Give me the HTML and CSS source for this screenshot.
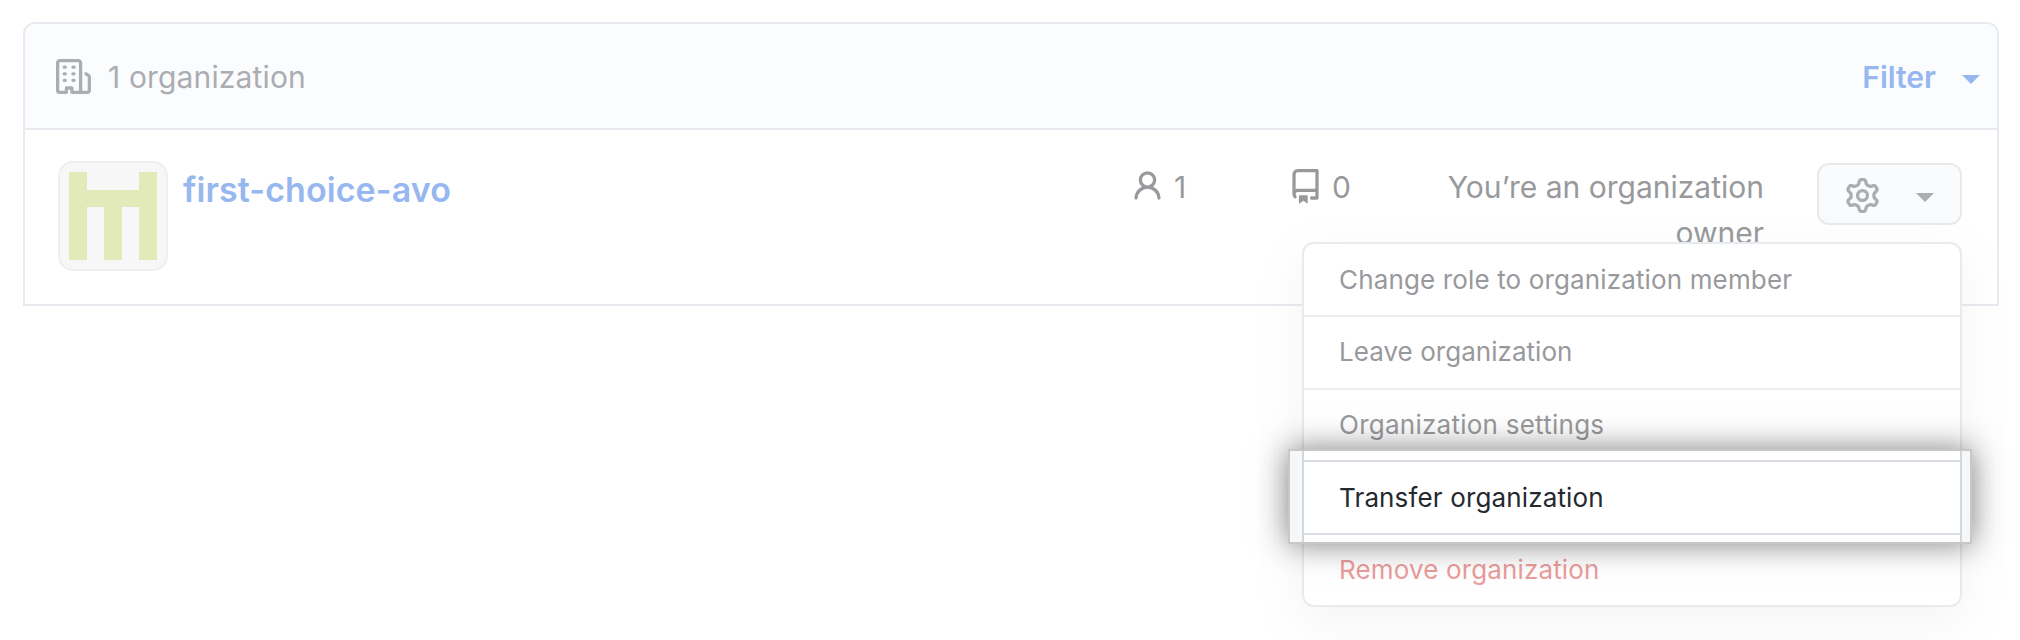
FILE: index.html
```html
<!DOCTYPE html>
<html lang="en">
<head>
<meta charset="utf-8">
<title>Organizations</title>
<link rel="stylesheet" href="styles.css">
</head>
<body>
<main class="box">
  <header class="box-header">
    <svg class="icon" viewBox="0 0 16 16"><path fill-rule="evenodd" d="M1.5 14.25c0 .138.112.25.25.25H4v-1.25a.75.75 0 01.75-.75h2.5a.75.75 0 01.75.75v1.25h2.25a.25.25 0 00.25-.25V1.75a.25.25 0 00-.25-.25h-8.5a.25.25 0 00-.25.25v12.5zM1.75 16A1.75 1.75 0 010 14.25V1.75C0 .784.784 0 1.75 0h8.5C11.216 0 12 .784 12 1.75v12.5c0 .085-.006.168-.018.25h2.268a.25.25 0 00.25-.25V8.285a.25.25 0 00-.111-.208l-1.055-.703a.75.75 0 11.832-1.248l1.055.703c.487.325.779.871.779 1.456v5.965A1.75 1.75 0 0114.25 16h-3.5a.75.75 0 01-.197-.026c-.099.017-.2.026-.303.026h-3a.75.75 0 01-.75-.75V14h-1v1.25a.75.75 0 01-.75.75h-3zM3 3.75A.75.75 0 013.75 3h.5a.75.75 0 010 1.5h-.5A.75.75 0 013 3.75zM3.75 6a.75.75 0 000 1.5h.5a.75.75 0 000-1.5h-.5zM3 9.75A.75.75 0 013.75 9h.5a.75.75 0 010 1.5h-.5A.75.75 0 013 9.75zM7.75 9a.75.75 0 000 1.5h.5a.75.75 0 000-1.5h-.5zM7 6.75A.75.75 0 017.75 6h.5a.75.75 0 010 1.5h-.5A.75.75 0 017 6.75zM7.75 3a.75.75 0 000 1.5h.5a.75.75 0 000-1.5h-.5z"/></svg>
    <span class="count">1 organization</span>
    <span class="filter">Filter<span class="caret"></span></span>
  </header>
  <section class="row">
    <svg class="avatar" viewBox="0 0 110 110"><rect class="avatar-bg" x="1" y="1" width="108" height="108" rx="14"/><path class="avatar-mark" d="M11 11h18v18h52V11h18v88H81V46H64v53H46V46H29v53H11z"/></svg>
    <a class="name">first-choice-avo</a>
    <span class="stat members"><svg class="icon" viewBox="0 0 16 16"><path fill-rule="evenodd" d="M10.5 5a2.5 2.5 0 11-5 0 2.5 2.5 0 015 0zm.061 3.073a4 4 0 10-5.123 0 6.004 6.004 0 00-3.431 5.142.75.75 0 001.498.07 4.5 4.5 0 018.99 0 .75.75 0 101.498-.07 6.005 6.005 0 00-3.432-5.142z"/></svg>1</span>
    <span class="stat repos"><svg class="icon" viewBox="0 0 16 16"><path fill-rule="evenodd" d="M2 2.5A2.5 2.5 0 014.5 0h8.75a.75.75 0 01.75.75v12.5a.75.75 0 01-.75.75h-2.5a.75.75 0 110-1.5h1.75v-2h-8a1 1 0 00-.714 1.7.75.75 0 01-1.072 1.05A2.495 2.495 0 012 11.5v-9zm10.5-1V9h-8c-.356 0-.694.074-1 .208V2.5a1 1 0 011-1h8zM5 12.25v3.25a.25.25 0 00.4.2l1.45-1.087a.25.25 0 01.3 0L8.6 15.7a.25.25 0 00.4-.2v-3.25a.25.25 0 00-.25-.25h-3.5a.25.25 0 00-.25.25z"/></svg>0</span>
    <span class="role">You&rsquo;re an organization owner</span>
    <div class="actions">
      <button class="gear"><svg class="icon" viewBox="0 0 16 16"><path fill-rule="evenodd" d="M7.429 1.525a6.593 6.593 0 011.142 0c.036.003.108.036.137.146l.289 1.105c.147.56.55.967.997 1.189.174.086.341.183.501.29.417.278.97.423 1.53.27l1.102-.303c.11-.03.175.016.195.046.219.31.41.641.573.989.014.031.022.11-.059.19l-.815.806c-.411.406-.562.957-.53 1.456a4.588 4.588 0 010 .582c-.032.499.119 1.05.53 1.456l.815.806c.08.08.073.159.059.19a6.494 6.494 0 01-.573.99c-.02.029-.086.074-.195.045l-1.103-.303c-.559-.153-1.112-.008-1.529.27-.16.107-.327.204-.5.29-.449.222-.851.628-.998 1.189l-.289 1.105c-.029.11-.101.143-.137.146a6.613 6.613 0 01-1.142 0c-.036-.003-.108-.037-.137-.146l-.289-1.105c-.147-.56-.55-.967-.997-1.189a4.502 4.502 0 01-.501-.29c-.417-.278-.97-.423-1.53-.27l-1.102.303c-.11.03-.175-.016-.195-.046a6.492 6.492 0 01-.573-.989c-.014-.031-.022-.11.059-.19l.815-.806c.411-.406.562-.957.53-1.456a4.587 4.587 0 010-.582c.032-.499-.119-1.05-.53-1.456l-.815-.806c-.08-.08-.073-.159-.059-.19a6.44 6.44 0 01.573-.99c.02-.029.086-.075.195-.045l1.103.303c.559.153 1.112.008 1.529-.27.16-.107.327-.204.5-.29.449-.222.851-.628.998-1.189l.289-1.105c.029-.11.101-.143.137-.146zM8 0c-.236 0-.47.01-.701.03-.743.065-1.29.615-1.458 1.261l-.29 1.106c-.017.066-.078.158-.211.224a5.994 5.994 0 00-.668.386c-.123.082-.233.09-.3.071L3.27 2.776c-.644-.177-1.392.02-1.82.63a7.977 7.977 0 00-.704 1.217c-.315.675-.111 1.422.363 1.891l.815.806c.05.048.098.147.088.294a6.084 6.084 0 000 .772c.01.147-.038.246-.088.294l-.815.806c-.474.469-.678 1.216-.363 1.891.2.428.436.835.704 1.218.428.609 1.176.806 1.82.63l1.103-.303c.066-.019.176-.011.299.071.213.143.436.272.668.386.133.066.194.158.212.224l.289 1.106c.169.646.715 1.196 1.458 1.26a8.094 8.094 0 001.402 0c.743-.064 1.29-.614 1.458-1.26l.29-1.106c.017-.066.078-.158.211-.224a5.98 5.98 0 00.668-.386c.123-.082.233-.09.3-.071l1.102.302c.644.177 1.392-.02 1.82-.63.268-.382.505-.789.704-1.217.315-.675.111-1.422-.364-1.891l-.814-.806c-.05-.048-.098-.147-.088-.294a6.1 6.1 0 000-.772c-.01-.147.039-.246.088-.294l.814-.806c.475-.469.679-1.216.364-1.891a7.992 7.992 0 00-.704-1.218c-.428-.609-1.176-.806-1.82-.63l-1.103.303c-.066.019-.176.011-.299-.071a5.991 5.991 0 00-.668-.386c-.133-.066-.194-.158-.212-.224L10.16 1.29C9.99.645 9.444.095 8.701.031A8.094 8.094 0 008 0zm1.5 8a1.5 1.5 0 11-3 0 1.5 1.5 0 013 0zM11 8a3 3 0 11-6 0 3 3 0 016 0z"/></svg><span class="caret"></span></button>
      <ul class="menu">
        <li class="item">Change role to organization member</li>
        <li class="item item-leave">Leave organization</li>
        <li class="item item-settings">Organization settings</li>
        <li class="item item-active">
          <div class="spotlight"><div class="slice"><div class="slice-row">Transfer organization</div></div></div>
        </li>
        <li class="item item-danger">Remove organization</li>
      </ul>
    </div>
  </section>
</main>
</body>
</html>
```
FILE: styles.css
```css
* { box-sizing: border-box; }

body {
  margin: 0;
  height: 640px;
  overflow: hidden;
  padding: 22px 21px 0 23px;
  background: #fff;
  color: #98999c;
  font: 400 30px/46px Inter, "Liberation Sans", sans-serif;
}

.box {
  height: 284px;
  border: 2px solid #e7ebef;
  border-radius: 12px 12px 0 0;
}

.box-header {
  display: flex;
  align-items: center;
  height: 106px;
  padding: 0 16px 0 31px;
  background: #fbfcfe;
  border-bottom: 2px solid #e7ebef;
  border-radius: 10px 10px 0 0;
  color: #abadb2;
}

.icon {
  display: block;
  flex: none;
  width: 35px;
  height: 35px;
  fill: currentColor;
}

.count { margin-left: 17px; padding-top: 2px; letter-spacing: .15px; }

.filter {
  display: flex;
  align-items: center;
  margin-left: auto;
  padding-top: 2px;
  color: #96b7f0;
  font-weight: 600;
}

.caret {
  width: 0;
  height: 0;
  border: solid transparent;
  border-width: 9px 9px 0;
  border-top-color: currentColor;
}

.filter .caret { margin: 4px 1px 0 26px; }

.row {
  display: flex;
  height: 174px;
  padding: 31px 35px 0 33px;
}

.avatar { width: 110px; height: 110px; }
.avatar-bg { fill: #f7f7f7; stroke: #efefef; stroke-width: 2; }
.avatar-mark { fill: #e2eab9; }

.name {
  width: 947px;
  margin: 6px 0 0 15px;
  color: #96b7f0;
  font-size: 34px;
  font-weight: 600;
  letter-spacing: .08px;
}

.stat {
  display: flex;
  width: 158px;
  height: 46px;
  margin-top: 3px;
  gap: 9px;
}

.repos { width: 150px; }
.stat .icon { margin-top: 5px; }

.role {
  width: 326px;
  margin-top: 3px;
  text-align: right;
}

.actions {
  position: relative;
  width: 145px;
  height: 62px;
  margin: 2px 0 0 auto;
}

.gear {
  display: flex;
  align-items: center;
  width: 145px;
  height: 62px;
  padding: 2px 0 0 26px;
  border: 2px solid #e9eaec;
  border-radius: 12px;
  background: #fafbfc;
  color: #abadb2;
}

.gear .caret { margin: 4px 0 0 36px; }

.menu {
  position: absolute;
  top: 79px;
  right: 0;
  width: 660px;
  height: 365px;
  margin: 0;
  padding: 0;
  list-style: none;
  background: #fff;
  border: 2px solid #e7ebef;
  border-radius: 12px;
  box-shadow: 0 16px 48px rgba(140, 149, 159, .1);
  font-size: 26px;
  letter-spacing: .14px;
}

.item {
  height: 73px;
  padding-left: 35px;
  border-bottom: 2px solid #eaeef2;
  line-height: 71px;
}

.item-leave { line-height: 69px; letter-spacing: .04px; }
.item-settings { height: 72px; line-height: 69px; letter-spacing: .25px; }
.item-active { position: relative; }
.item-danger { height: 70px; border: 0; color: #eb9c9c; line-height: 69px; }

.spotlight {
  position: absolute;
  top: -13px;
  left: -16px;
  width: 684px;
  height: 95px;
  padding: 0 8px 0 12px;
  border: 2px solid #c8c8c8;
  background: #f5f7f8;
  box-shadow: 0 0 30px rgba(0, 0, 0, .5);
  color: #24292f;
  line-height: 71px;
}

.slice {
  height: 91px;
  padding-top: 9px;
  background: #fff;
  border: solid #d0d7de;
  border-width: 0 2px;
}

.slice-row {
  height: 75px;
  padding-left: 35px;
  border: solid #d8dee4;
  border-width: 2px 0;
}
```
